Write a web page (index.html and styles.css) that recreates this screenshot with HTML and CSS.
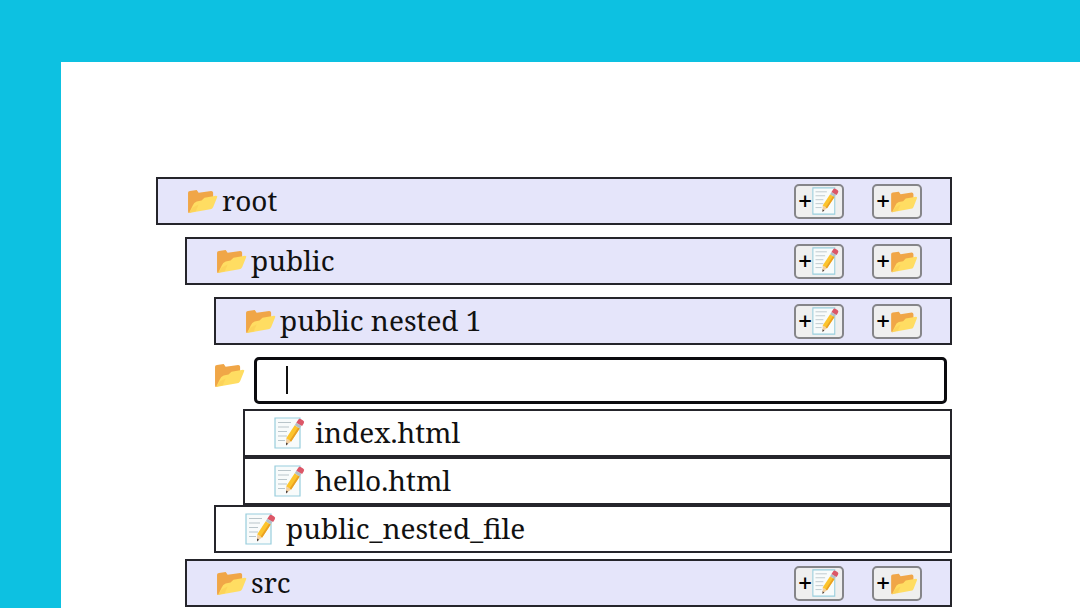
FILE: index.html
```
<!DOCTYPE html>
<html lang="en">
<head>
    <meta charset="UTF-8">
    <meta name="viewport" content="width=device-width, initial-scale=1.0">
    <title>File Explorer</title>
    <link rel="stylesheet" href="styles.css">
</head>
<body>
    <!-- shared icons -->
    <svg class="sprite" aria-hidden="true">
        <symbol id="folder" viewBox="0 0 32 28">
            <path fill="#f0a647" d="M1 5Q1 3 3 3l7-1 2 3 13-2q2 0 2 2v6L6 24 2 26Q1 26 1 24z"/>
            <path fill="#ffdd62" d="M2 26 6 18q1-3 4-4l5-1 3-3 12-2q2 0 1 2l-4 10q-1 2-3 2z"/>
            <path fill="#f8c64f" d="M2 26 6 20l6-3-3 7z" opacity=".4"/>
        </symbol>
        <symbol id="note" viewBox="0 0 32 32">
            <path fill="#f8fbfb" stroke="#98cedd" stroke-width="1.2" d="M1 1h25v30H1z"/>
            <path fill="none" stroke="#b9c5ca" d="M4 5.500h13M4 10h11M4 14.500h9M4 19h9M4 23.500h7"/>
            <path fill="#f2cfa0" d="m12.200 21.200 5 3.200L12 28z"/>
            <path fill="#50443f" d="m12 25.500 2.200 1.300L12 28.500z"/>
            <path fill="#fcc42c" d="m20.700 8.200 5 3.200-8.500 13-5-3.200z"/>
            <path fill="#e99f22" d="m24.200 10.400 1.500 1-8.500 13-1.500-1z"/>
            <path fill="#b3bfc5" d="m22.300 5.700 5 3.200-1.600 2.500-5-3.200z"/>
            <path fill="#dc5768" d="m22.300 5.700 1.800-2.800q1.200-1.800 3-.7l2 1.300q1.800 1.200.6 3l-1.600 2.600z"/>
        </symbol>
    </svg>

    <main class="panel">
        <div class="tree">
            <div class="folder">
                <span class="name"><svg class="icon-folder"><use href="#folder"/></svg>root</span>
                <div class="actions">
                    <button type="button" aria-label="Add file">+<svg class="small-note"><use href="#note"/></svg></button>
                    <button type="button" aria-label="Add folder">+<svg class="small-folder"><use href="#folder"/></svg></button>
                </div>
            </div>
            <div class="children">
                <div class="folder">
                    <span class="name"><svg class="icon-folder"><use href="#folder"/></svg>public</span>
                    <div class="actions">
                        <button type="button" aria-label="Add file">+<svg class="small-note"><use href="#note"/></svg></button>
                        <button type="button" aria-label="Add folder">+<svg class="small-folder"><use href="#folder"/></svg></button>
                    </div>
                </div>
                <div class="children">
                    <div class="folder">
                        <span class="name"><svg class="icon-folder"><use href="#folder"/></svg>public nested 1</span>
                        <div class="actions">
                            <button type="button" aria-label="Add file">+<svg class="small-note"><use href="#note"/></svg></button>
                            <button type="button" aria-label="Add folder">+<svg class="small-folder"><use href="#folder"/></svg></button>
                        </div>
                    </div>
                    <div class="new-item">
                        <label for="newFolder"><svg class="icon-folder"><use href="#folder"/></svg></label>
                        <div class="field">
                            <input type="text" id="newFolder" aria-label="Folder name">
                            <span class="caret"></span>
                        </div>
                    </div>
                    <div class="children">
                        <div class="file"><span class="name"><svg class="icon-note"><use href="#note"/></svg>index.html</span></div>
                        <div class="file"><span class="name"><svg class="icon-note"><use href="#note"/></svg>hello.html</span></div>
                    </div>
                    <div class="file"><span class="name"><svg class="icon-note"><use href="#note"/></svg>public_nested_file</span></div>
                </div>
                <div class="folder">
                    <span class="name"><svg class="icon-folder"><use href="#folder"/></svg>src</span>
                    <div class="actions">
                        <button type="button" aria-label="Add file">+<svg class="small-note"><use href="#note"/></svg></button>
                        <button type="button" aria-label="Add folder">+<svg class="small-folder"><use href="#folder"/></svg></button>
                    </div>
                </div>
            </div>
        </div>
    </main>
</body>
</html>
```
FILE: styles.css
```
* {
    box-sizing: border-box;
}

body {
    margin: 0;
    padding: 62px 0 0 61px;
    height: 100vh;
    overflow: hidden;
    background: #0dc1e1;
    color: #111;
    font-family: "Noto Serif", "Droid Serif", "Liberation Serif", serif;
    font-size: 28px;
    line-height: 40px;
}

.sprite {
    position: absolute;
    width: 0;
    height: 0;
}

.panel {
    min-height: 100%;
    padding: 109px 128px 0 95px;
    background: #fff;
}

.folder,
.file {
    display: flex;
    align-items: center;
    height: 48px;
    padding: 0 28px 0 29px;
    border: 2px solid #25252b;
}

.folder {
    justify-content: space-between;
    margin: 12px 0;
    background: #e5e5fa;
}

.tree > .folder {
    margin-top: 6px;
}

.children + .folder {
    margin-top: 6px;
}

.children {
    padding-left: 29px;
}

.name {
    display: flex;
    align-items: center;
    padding-bottom: 3px;
}

.icon-folder {
    width: 31px;
    height: 27px;
}

.name .icon-folder {
    margin: 4px 4px 0 0;
}

.icon-note {
    width: 32px;
    height: 32px;
    margin: 2px 9px 0 0;
}

.actions {
    display: flex;
    gap: 28px;
}

button {
    display: flex;
    align-items: center;
    justify-content: center;
    width: 50px;
    height: 35px;
    padding: 0;
    border: 2px solid #858589;
    border-radius: 5px;
    background: #efefef;
    color: #000;
    font-family: "Noto Sans", sans-serif;
    font-size: 24px;
    font-weight: 500;
    line-height: 28px;
    cursor: pointer;
}

.small-note {
    width: 28px;
    height: 28px;
}

.small-folder {
    width: 28px;
    height: 24px;
    margin-top: 1px;
}

.new-item {
    display: flex;
    gap: 9px;
    padding-right: 5px;
    margin-bottom: 5px;
}

.new-item label {
    height: 28px;
    margin-top: 5px;
    line-height: 28px;
}

.field {
    position: relative;
    flex: 1;
    display: flex;
}

.field input {
    width: 100%;
    height: 47px;
    padding: 0 29px;
    border: 3px solid #0b0b0f;
    border-radius: 5px;
    outline: none;
    background: #fff;
    font: inherit;
}

.caret {
    position: absolute;
    top: 9px;
    left: 32px;
    width: 2px;
    height: 28px;
    background: #111;
}
```
